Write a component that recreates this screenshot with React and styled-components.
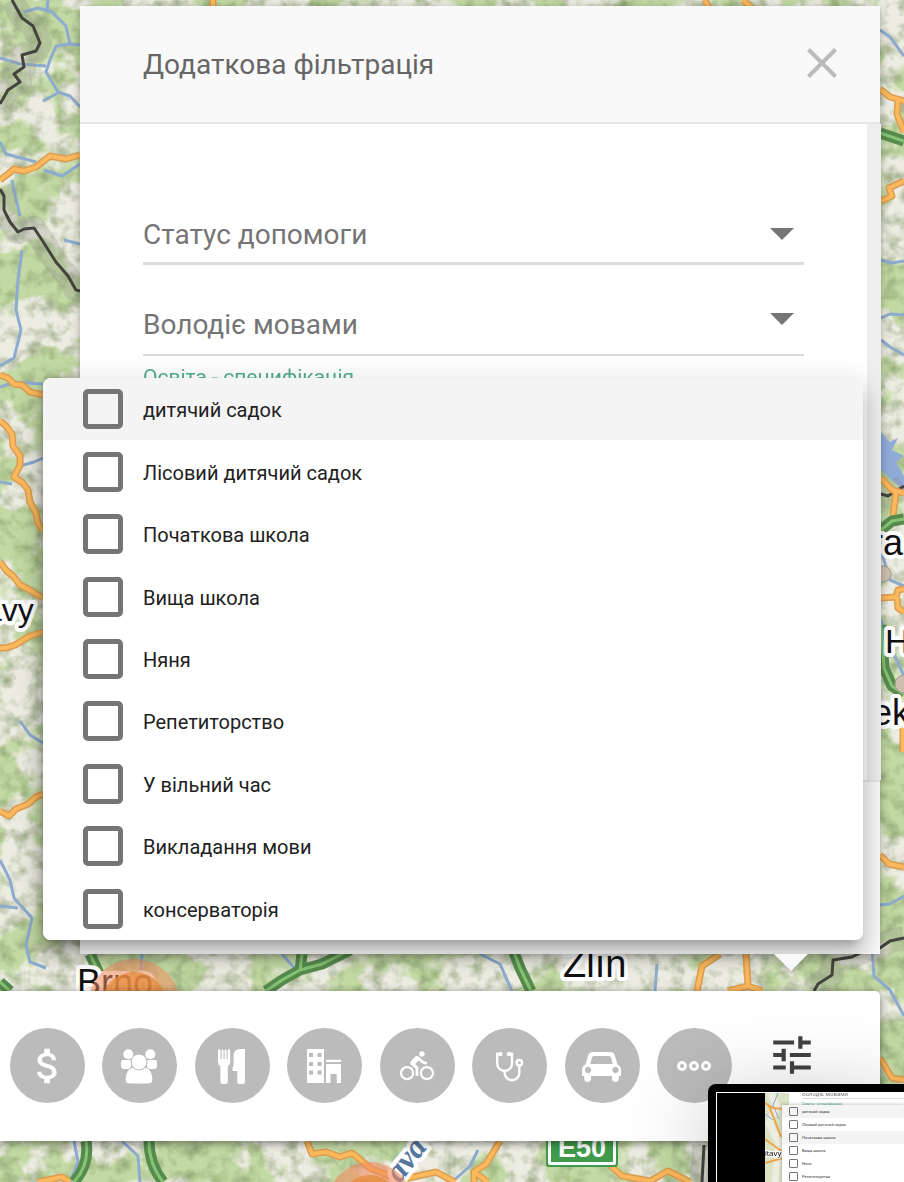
import { useState } from "react";
import styled, { createGlobalStyle } from "styled-components";
import { MdAttachMoney, MdDirectionsBike, MdTune } from "react-icons/md";

const options = [
    "дитячий садок",
    "Лісовий дитячий садок",
    "Початкова школа",
    "Вища школа",
    "Няня",
    "Репетиторство",
    "У вільний час",
    "Викладання мови",
    "консерваторія"
];

const rivers = [
    "M24 12L38 8L52 12L66 26L70 44L80 45M70 44L56 46L50 60L46 72L58 92L70 96L80 107M48 0L47 10M0 58L20 64L46 66M43 101L58 93",
    "M0 142L6 154L36 162M44 170L62 176L80 164M12 180L15 194L20 216M64 240L80 244M22 250L18 280L16 310L21 330L14 358L0 366",
    "M0 387L14 382L43 384M20 466L34 462L43 458M0 482L12 484M20 721L30 735L43 743",
    "M0 860L10 880L14 898L32 918L26 945L30 962L46 968M0 906L18 908",
    "M880 30L890 37L904 56M881 260L892 263L904 261M881 318L890 314L904 315M881 340L890 347L904 355",
    "M881 550L890 580L904 586M881 620L892 650L904 676M880 905L890 904L904 896M872 950L874 976L890 990L904 1016",
    "M282 954L296 970M480 954L500 964L512 991M74 1141L78 1162L70 1182M122 1141L138 1156L140 1182M478 1150L470 1166L452 1182M657 964L655 991M142 954L141 970"
];

const roads = [
    "M0 180L8 174L14 169L24 171L36 167L50 156L66 159L80 155",
    "M0 375L8 378L14 384L22 385L30 392L43 395",
    "M0 421L6 426L12 434L13 446L20 456L20 465L14 477L23 483L28 490L30 502L36 513L38 523L43 531",
    "M0 562L6 570L14 577L20 585L28 589L43 598",
    "M0 648L6 648L15 645L30 636L43 632",
    "M0 811L9 816L16 809L28 804L36 797L43 794",
    "M213 0V8M705 0L709 8M743 0L752 8",
    "M880 89L890 97L904 101M898 101L897 114L904 132",
    "M881 201L892 196L889 188L904 181",
    "M881 478L892 490L904 493M896 493L893 516M881 598L896 597L898 590L904 589M897 598L898 608L904 612M903 728V752",
    "M880 855L889 864L904 867M880 1058L892 1078L904 1080",
    "M720 954L702 966L697 991M746 954L748 986L728 991M748 986L762 991",
    "M307 1141L312 1154L326 1152L340 1157L352 1153L370 1168L400 1180L436 1172L455 1182",
    "M500 1141L486 1164L474 1172V1182M474 1172L488 1182M610 1165L622 1176L650 1181L668 1171L690 1182",
    "M38 1182L62 1177L70 1182"
];

const highways = [
    "M880 133L904 141",
    "M881 530L892 521L904 519",
    "M881 625L884 668L892 686L904 694",
    "M90 954L102 980M0 982L10 991",
    "M266 991L282 980L300 970L322 964L350 950M302 954L300 970M513 950L520 968L531 991",
    "M86 1141Q90 1164 74 1182M149 1141Q149 1164 163 1182"
];

const borders = [
    "M12 0L22 18L33 26L40 43L36 51L22 55L24 67L14 74L20 82L8 90L0 104",
    "M0 189L4 196L4 210L10 222L18 232L24 229L34 228L42 240L56 262L68 276L76 290L80 291",
    "M881 494L888 496L904 486M814 991L818 984L832 975L833 960L852 957L866 950L880 948L890 941L904 938M704 1145L702 1182"
];

const places = [
    { name: "avy", x: -16, y: 621, size: 32 },
    { name: "Brno", x: 77, y: 995, size: 36 },
    { name: "Zlín", x: 563, y: 977, size: 38 },
    { name: "ra", x: 871, y: 555, size: 36 },
    { name: "H", x: 885, y: 653, size: 34 },
    { name: "ek", x: 872, y: 725, size: 36 }
];

function TerrainMap() {
    return (
        <MapSvg viewBox="0 0 904 1182" preserveAspectRatio="xMidYMid slice" aria-hidden="true">
            <defs>
                <filter id="forest" x="0" y="0" width="100%" height="100%" colorInterpolationFilters="sRGB">
                    <feTurbulence type="fractalNoise" baseFrequency="0.016" numOctaves="5" seed="8" />
                    <feColorMatrix values="0 0 0 0 0.76  0 0 0 0 0.85  0 0 0 0 0.64  11 0 0 0 -5" />
                </filter>
                <filter id="relief" x="0" y="0" width="100%" height="100%" colorInterpolationFilters="sRGB">
                    <feTurbulence type="fractalNoise" baseFrequency="0.07" numOctaves="3" seed="3" />
                    <feColorMatrix values="0 0 0 0 0.50  0 0 0 0 0.58  0 0 0 0 0.40  0 1.5 0 0 -0.65" />
                </filter>
            </defs>
            <rect width="904" height="1182" fill="#edece2" />
            <rect width="904" height="1182" filter="url(#forest)" />
            <rect width="904" height="1182" filter="url(#relief)" />
            <path d="M881 432L890 442L898 438L892 450L904 456L896 462L904 476V490L892 480L881 470Z" fill="#8fabd8" />
            <g fill="none" strokeLinejoin="round">
                {rivers.map((d) => <path key={d} d={d} stroke="#8daacf" strokeWidth="3" />)}
                {borders.map((d) => <path key={d} d={d} stroke="#8b8b84" strokeOpacity="0.25" strokeWidth="24" />)}
                {borders.map((d) => <path key={d} d={d} stroke="#44443e" strokeWidth="3" />)}
                {roads.map((d) => <path key={d} d={d} stroke="#dc9c50" strokeWidth="7" />)}
                {roads.map((d) => <path key={d} d={d} stroke="#fbb85c" strokeWidth="4" />)}
                {highways.map((d) => <path key={d} d={d} stroke="#578b4e" strokeWidth="11" />)}
                {highways.map((d) => <path key={d} d={d} stroke="#86c474" strokeWidth="3" />)}
            </g>
            <circle cx="883" cy="574" r="8" fill="#cdbfae" stroke="#a39a90" />
            <circle cx="904" cy="684" r="9" fill="#cdbfae" stroke="#a39a90" />
            <g fontFamily="Liberation Sans, sans-serif" fill="#111" stroke="#fff" strokeWidth="8" paintOrder="stroke" strokeLinejoin="round">
                {places.map((place) => <text key={place.name} x={place.x} y={place.y} fontSize={place.size}>{place.name}</text>)}
            </g>
            <circle cx="134" cy="1005" r="46" fill="#f08a5d" fillOpacity="0.55" />
            <circle cx="134" cy="1005" r="33" fill="#e78b3c" fillOpacity="0.75" />
            <text x="400" y="1184" transform="rotate(-53 400 1184)" fontFamily="Liberation Serif, serif" fontSize="32" fontWeight="bold" fontStyle="italic" fill="#56789f" stroke="#fff" strokeWidth="8" paintOrder="stroke">ava</text>
            <circle cx="370" cy="1205" r="43" fill="#f08a5d" fillOpacity="0.6" />
            <circle cx="370" cy="1205" r="30" fill="#e78b3c" fillOpacity="0.75" />
            <rect x="546" y="1126" width="72" height="41" rx="3" fill="#3f9b4b" />
            <rect x="548" y="1128" width="68" height="37" rx="2" fill="#fff" />
            <rect x="551" y="1131" width="62" height="31" fill="#3f9b4b" />
            <text x="582" y="1157" textAnchor="middle" fontFamily="Liberation Sans, sans-serif" fontSize="27" fontWeight="bold" fill="#fff">E50</text>
        </MapSvg>
    );
}

function PeopleIcon() {
    return (
        <Glyph viewBox="0 0 75 75">
            <circle cx="26.300" cy="26.300" r="5" />
            <circle cx="48.300" cy="26.300" r="5" />
            <path d="M21 32H29V41H22Q19 41 19 38V35Q19 32 21 32ZM53 32H45V41H52Q55 41 55 38V35Q55 32 53 32Z" />
            <path d="M30 39.500H44Q50 41 51 51Q51 56 46 56H28Q23 56 23 51Q24 41 30 39.500Z" stroke="#bbb" />
            <circle cx="37" cy="34" r="8" stroke="#bbb" />
        </Glyph>
    );
}

function FoodIcon() {
    return (
        <Glyph viewBox="0 0 75 75">
            <path d="M23 22.5a1.3 1.3 0 0 1 2.6 0V31h1V22.5a1 1 0 0 1 2 0V31h1V22.5a1 1 0 0 1 2 0V31h1V22.5a1.3 1.3 0 0 1 2.6 0V34Q35 37 32.8 38V53.5a2.5 2.5 0 0 1-2.5 2.5h-2.4a2.5 2.5 0 0 1-2.5-2.5V38Q23 37 23 34Z" />
            <path d="M50 21V53.5a2.5 2.5 0 0 1-2.5 2.5h-2.7a2.5 2.5 0 0 1-2.5-2.5V43H37.6V40L38.6 37V27Q39 21 45 21Z" />
        </Glyph>
    );
}

function BuildingIcon() {
    return (
        <Glyph viewBox="0 0 75 75">
            <path fillRule="evenodd" d="M20 21H37V55H20ZM22 25V29H26V25ZM30.500 25V29H34.500V25ZM22 34V38H26V34ZM30.500 34V38H34.500V34ZM22 42.500V46.500H26V42.500ZM30.500 42.500V46.500H34.500V42.500Z" />
            <path d="M39 31.800H54V34H39ZM39 36H54V55H49.700V46H43.500V55H39Z" />
        </Glyph>
    );
}

function StethoscopeIcon() {
    return (
        <Glyph viewBox="0 0 75 75">
            <g fill="none" stroke="#fff" strokeWidth="2.400">
                <path d="M28 26H25.200V35.500A7.400 7.400 0 0 0 40 35.500V26H37" />
                <path d="M32.700 43V45A7.300 7.300 0 0 0 47.300 45V37.500" />
                <circle cx="47.300" cy="34.700" r="2.700" />
            </g>
            <circle cx="28.300" cy="26" r="2.300" />
            <circle cx="37" cy="26" r="2.300" />
        </Glyph>
    );
}

function CarIcon() {
    return (
        <Glyph viewBox="0 0 75 75">
            <path fillRule="evenodd" d="M28 24H45Q49 24 50 28L52.500 36.500Q56 38 56 42V47Q56 48 55 48H53.800V50.500a3.400 3.400 0 0 1-6.800 0V48H26V50.500a3.400 3.400 0 0 1-6.800 0V48H18Q17 48 17 47V42Q17 38 20.500 36.500L23 28Q24 24 28 24ZM29 28Q27.500 28 27 29.500L25.300 36H47.700L46 29.500Q45.500 28 44 28ZM23 38.800a3.200 3.200 0 1 0 .1 0ZM50.500 38.800a3.200 3.200 0 1 0 .1 0Z" />
        </Glyph>
    );
}

function MoreIcon() {
    return (
        <Glyph viewBox="0 0 75 75">
            <g fill="none" stroke="#fff" strokeWidth="3">
                <circle cx="25" cy="38" r="3.500" />
                <circle cx="37" cy="38" r="3.500" />
                <circle cx="49" cy="38" r="3.500" />
            </g>
        </Glyph>
    );
}

const categories = [
    { label: "Фінанси", icon: <MdAttachMoney size={46} /> },
    { label: "Люди", icon: <PeopleIcon /> },
    { label: "Їжа", icon: <FoodIcon /> },
    { label: "Житло", icon: <BuildingIcon /> },
    { label: "Дозвілля", icon: <MdDirectionsBike size={34} /> },
    { label: "Здоров'я", icon: <StethoscopeIcon /> },
    { label: "Транспорт", icon: <CarIcon /> },
    { label: "Інше", icon: <MoreIcon /> }
];

function SelectField(props) {
    return (
        <Field $compact={props.compact}>
            <select aria-label={props.label}>
                <option>{props.label}</option>
            </select>
            <svg width="24" height="12" viewBox="0 0 24 12" aria-hidden="true">
                <path d="M0 0H24L12 12Z" fill="#757575" />
            </svg>
        </Field>
    );
}

function Option(props) {
    return (
        <OptionRow $active={props.active}>
            <input type="checkbox" checked={props.checked} onChange={props.onToggle} />
            <span>{props.name}</span>
        </OptionRow>
    );
}

function Preview() {
    return (
        <PreviewFrame aria-hidden="true">
            <PreviewScreen>
                <PreviewMap viewBox="0 0 24 90">
                    <rect width="24" height="90" fill="#dbe3c5" />
                    <path d="M6 0L12 14L4 30L14 50L10 90" fill="none" stroke="#edece0" strokeWidth="7" />
                    <path d="M13 0L8 12L14 26M0 21L8 27" fill="none" stroke="#86a5cd" />
                    <path d="M0 10L8 15L18 16M4 13L10 28L16 44M0 46L8 52L18 59M0 70L18 65" fill="none" stroke="#f0a248" strokeWidth="2" />
                    <text x="0" y="63" fontFamily="Liberation Sans, sans-serif" fontSize="8" fill="#111" stroke="#fff" strokeWidth="2" paintOrder="stroke">itavy</text>
                </PreviewMap>
                <PreviewPage>
                    <PreviewField>Володіє мовами</PreviewField>
                    <PreviewCaption>Освіта - специфікація</PreviewCaption>
                    <PreviewMenu>
                        {options.slice(0, 6).map((name, i) => (
                            <PreviewRow key={name} $active={i === 0 || i === 2}><i />{name}</PreviewRow>
                        ))}
                    </PreviewMenu>
                </PreviewPage>
            </PreviewScreen>
        </PreviewFrame>
    );
}

export default function App() {
    const [selected, setSelected] = useState([]);

    function toggle(name) {
        setSelected(selected.includes(name) ? selected.filter((s) => s !== name) : [...selected, name]);
    }

    return (
        <Page>
            <GlobalStyle />
            <TerrainMap />
            <Panel>
                <PanelHeader>
                    <h1>Додаткова фільтрація</h1>
                    <CloseButton type="button" aria-label="Закрити">
                        <svg width="30" height="30" viewBox="0 0 30 30">
                            <path d="M1.500 1.500L28.500 28.500M28.500 1.500L1.500 28.500" stroke="#bbb" strokeWidth="4" />
                        </svg>
                    </CloseButton>
                </PanelHeader>
                <PanelBody>
                    <SelectField label="Статус допомоги" compact />
                    <SelectField label="Володіє мовами" />
                    <Caption id="education">Освіта - специфікація</Caption>
                </PanelBody>
                <PanelFooter />
                <Menu role="group" aria-labelledby="education">
                    {options.map((name, i) => (
                        <Option key={name} name={name} active={i === 0} checked={selected.includes(name)} onToggle={() => toggle(name)} />
                    ))}
                </Menu>
            </Panel>
            <Toolbar>
                <Categories>
                    {categories.map((category) => (
                        <CategoryButton key={category.label} type="button" aria-label={category.label}>{category.icon}</CategoryButton>
                    ))}
                </Categories>
                <FilterButton type="button" aria-label="Фільтри"><MdTune size={50} /></FilterButton>
            </Toolbar>
            <Preview />
        </Page>
    );
}

const GlobalStyle = createGlobalStyle`
    *{
        box-sizing: border-box;
    }

    body{
        margin: 0;
        font-family: Roboto, "Liberation Sans", sans-serif;
    }

    button{
        border: none;
        padding: 0;
        cursor: pointer;
    }
`;

const Page = styled.main`
    position: relative;
    min-height: 100vh;
    padding-top: 6px;
    overflow: hidden;
`;

const MapSvg = styled.svg`
    position: absolute;
    inset: 0;
    width: 100%;
    height: 100%;
`;

const Panel = styled.section`
    position: relative;
    margin: 0 24px 0 80px;
    filter: drop-shadow(0 2px 4px rgba(0,0,0,0.3));

    /* pointer towards the filter button */
    &::after{
        content: "";
        position: absolute;
        top: 100%;
        right: 72px;
        border: 17px solid transparent;
        border-bottom: none;
        border-top-color: #f8f8f8;
    }
`;

const PanelHeader = styled.header`
    display: flex;
    align-items: center;
    justify-content: space-between;
    height: 118px;
    padding: 0 43px 2px 63px;
    background-color: #f9f9f9;
    border-bottom: 2px solid #e5e5e5;

    h1{
        margin: 0;
        padding-top: 4px;
        font-size: 28px;
        font-weight: 400;
        line-height: 36px;
        color: #666;
    }
`;

const CloseButton = styled.button`
    display: flex;
    background: none;
`;

const PanelBody = styled.div`
    height: 656px;
    margin-right: -1px;
    padding: 82px 63px 0 63px;
    background-color: #fff;
    border-right: 14px solid #eee;
`;

const PanelFooter = styled.footer`
    height: 174px;
    background-color: #f9f9f9;
    border-top: 2px solid #e5e5e5;
`;

const Field = styled.div`
    display: grid;
    align-items: center;
    margin-bottom: ${prop=>prop.$compact?"29px":"9px"};
    border-bottom: ${prop=>prop.$compact?"3px":"2px"} solid #dcdcdc;

    select, svg{
        grid-area: 1 / 1;
    }

    select{
        appearance: none;
        width: 100%;
        height: ${prop=>prop.$compact?"56px":"60px"};
        padding: 0;
        border: none;
        background: none;
        font-family: inherit;
        font-size: 28px;
        color: #757575;
    }

    svg{
        justify-self: end;
        margin-right: 10px;
        margin-bottom: ${prop=>prop.$compact?"0":"10px"};
        pointer-events: none;
    }
`;

const Caption = styled.div`
    font-size: 21px;
    line-height: 24px;
    color: #50ad8d;
`;

const Menu = styled.div`
    position: absolute;
    top: 372px;
    left: -37px;
    right: 17px;
    display: grid;
    grid-auto-rows: 1fr;
    height: 562px;
    background-color: #fff;
    border-radius: 8px;
    overflow: hidden;
    box-shadow: 0 10px 10px -6px rgba(0,0,0,0.2), 0 16px 20px 2px rgba(0,0,0,0.14), 0 6px 28px 4px rgba(0,0,0,0.12);
`;

const OptionRow = styled.label`
    display: flex;
    align-items: center;
    gap: 20px;
    padding-left: 40px;
    background-color: ${prop=>prop.$active?"#f4f4f4":"#fff"};
    font-size: 20px;
    line-height: 24px;
    color: #212121;
    cursor: pointer;

    span{
        padding-top: 2px;
    }

    input{
        appearance: none;
        width: 40px;
        height: 40px;
        margin: 0;
        border: 5px solid #757575;
        border-radius: 5px;
        cursor: pointer;
    }

    input:checked{
        background-color: #757575;
    }
`;

const Toolbar = styled.nav`
    position: relative;
    display: flex;
    justify-content: space-between;
    height: 150px;
    margin: 37px 24px 41px 0;
    padding: 37px 63px 0 10px;
    background-color: #fff;
    border-radius: 0 5px 5px 0;
    box-shadow: 0 2px 8px rgba(0,0,0,0.5);
`;

const Categories = styled.div`
    display: flex;
    flex: 1;
    justify-content: space-between;
    margin-right: 35px;
`;

const CategoryButton = styled.button`
    display: flex;
    align-items: center;
    justify-content: center;
    width: 75px;
    height: 75px;
    border-radius: 50%;
    background-color: #bbb;
    color: #fff;
`;

const FilterButton = styled.button`
    display: flex;
    align-items: center;
    justify-content: center;
    width: 50px;
    height: 54px;
    background: none;
    color: #424242;
`;

const Glyph = styled.svg`
    width: 75px;
    height: 75px;
    fill: #fff;
`;

const PreviewFrame = styled.aside`
    position: absolute;
    right: 0;
    bottom: 0;
    width: 196px;
    height: 98px;
    padding: 8px 0 0 8px;
    background-color: #000;
    border-radius: 8px 0 0 0;
    box-shadow: 0 16px 90px rgba(0,0,0,0.24);
`;

const PreviewScreen = styled.div`
    display: flex;
    height: 90px;
    padding-left: 48px;
    border-top: 1px solid #fff;
    border-left: 1px solid #fff;
    overflow: hidden;
`;

const PreviewMap = styled.svg`
    flex: none;
    width: 24px;
    height: 90px;
`;

const PreviewPage = styled.div`
    flex: 1;
    background-color: #fff;
    font-size: 4px;
    line-height: 5px;
    color: #333;
`;

const PreviewField = styled.div`
    height: 6px;
    margin-left: 13px;
    font-size: 6px;
    line-height: 2px;
    color: #777;
    border-bottom: 1px solid #ddd;
`;

const PreviewCaption = styled.div`
    height: 6px;
    padding: 2px 0 0 13px;
    color: #50ad8d;
`;

const PreviewMenu = styled.div`
    position: relative;
    margin-left: -7px;
    background-color: #fff;
    box-shadow: 0 0 4px rgba(0,0,0,0.3);
`;

const PreviewRow = styled.div`
    display: flex;
    align-items: center;
    gap: 4px;
    height: 13px;
    padding-left: 7px;
    background-color: ${prop=>prop.$active?"#f4f4f4":"#fff"};

    i{
        width: 9px;
        height: 9px;
        border: 1px solid #757575;
        border-radius: 1px;
    }
`;
